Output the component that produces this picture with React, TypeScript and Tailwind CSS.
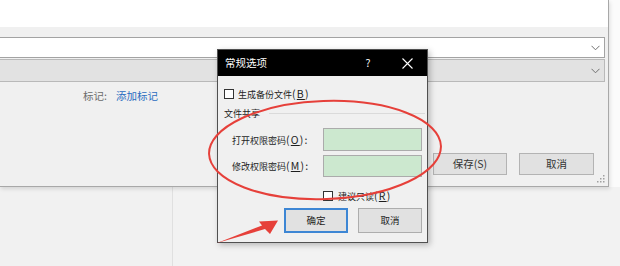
import React from "react";

function Chevron() {
  return (
    <svg width="9" height="6" viewBox="0 0 9 6" className="shrink-0">
      <polyline points="0.5,0.8 4.5,4.8 8.5,0.8" fill="none" stroke="#707070" strokeWidth="1" />
    </svg>
  );
}

function CheckBox() {
  return <span className="inline-block h-[10px] w-[10px] shrink-0 border border-[#333] bg-white" />;
}

// access-key suffix like (O): — rendered a bit wider than the CJK text, as in the dialog
function Key({ k, colon = false }: { k: string; colon?: boolean }) {
  return (
    <span className="text-[10.5px] tracking-[1.2px]">
      (<span className="underline">{k}</span>){colon ? ":" : ""}
    </span>
  );
}

function Grip() {
  return (
    <svg width="8" height="8" viewBox="0 0 8 8" className="absolute right-[3px] bottom-[3px]">
      {[
        [6, 1],
        [6, 4],
        [3, 4],
        [6, 7],
        [3, 7],
        [0, 7],
      ].map(([x, y]) => (
        <rect key={`${x}-${y}`} x={x} y={y - 1} width="1.5" height="1.5" fill="#a0a0a0" />
      ))}
    </svg>
  );
}

export default function App() {
  return (
    <div className="relative flex h-[266px] w-[620px] flex-col overflow-hidden bg-white font-['Noto_Sans_CJK_SC',sans-serif] text-[#1e1e1e]">
      {/* --- save-as window behind --- */}
      <div className="flex h-[187px] shrink-0">
        <div className="relative flex w-[609px] flex-col border-r border-b border-[#a8a8a8] bg-[#f0f0f0] shadow-[1px_2px_4px_rgba(0,0,0,0.12)]">
          <div className="h-[27px] bg-white" />
          <div className="mt-[10px] flex h-[21px] w-[605px] items-center justify-end border border-l-0 border-[#a3a3a3] bg-white pr-[4px]">
            <Chevron />
          </div>
          <div className="mt-px flex h-[23px] w-[605px] items-center justify-end border border-l-0 border-[#b9b9b9] bg-[#e2e2e2] pr-[4px]">
            <Chevron />
          </div>
          <div className="mt-[4px] flex h-[20px] items-center pl-[83px] text-[10.5px]">
            <span className="text-[#6b6b6b]">标记:</span>
            <span className="ml-[9px] text-[#2a6cc0]">添加标记</span>
          </div>
          <div className="mt-auto mb-[11px] flex justify-end gap-[12px] pr-[14px] text-[10.5px]">
            <button className="h-[22px] w-[74px] border border-[#b3b3b3] bg-[#e1e1e1] text-[#333]">保存(S)</button>
            <button className="h-[22px] w-[75px] border border-[#b3b3b3] bg-[#e1e1e1] text-[#333]">取消</button>
          </div>
          <Grip />
        </div>
        <div className="flex-1 bg-[#fbfbfb]" />
      </div>

      <div className="flex flex-1">
        <div className="w-[173px] border-r border-[#e0e0e0] bg-[#f1f1f1]" />
        <div className="flex-1 bg-[#f2f2f2]" />
      </div>

      {/* --- 常规选项 dialog --- */}
      <div className="absolute top-[49px] left-[217px] flex h-[194px] w-[211px] flex-col border border-[#505050] bg-[#f0f0f0] shadow-[2px_2px_6px_rgba(0,0,0,0.25)]">
        <div className="flex h-[26px] items-center bg-black pl-[7px] text-[10.5px] text-white">
          <span>常规选项</span>
          <span className="ml-auto flex w-[20px] justify-center">?</span>
          <span className="ml-[19px] mr-[10px] flex w-[20px] justify-center">
            <svg width="11" height="11" viewBox="0 0 11 11">
              <path d="M0.5 0.5 L10.5 10.5 M10.5 0.5 L0.5 10.5" stroke="#fff" strokeWidth="1.1" />
            </svg>
          </span>
        </div>

        <div className="flex flex-col pr-[5px] pl-[6px] text-[9px]">
          <div className="mt-[11px] flex h-[13px] items-center gap-[4px]">
            <CheckBox />
            <span>
              生成备份文件<Key k="B" />
            </span>
          </div>

          <div className="mt-[6px] flex h-[15px] items-center">
            <span>文件共享</span>
            <span className="mr-[-3px] ml-[9px] h-px flex-1 bg-[#dadada]" />
          </div>

          <div className="mt-[7px] flex h-[23px] items-center justify-between pl-[8px]">
            <span>
              打开权限密码<Key k="O" colon />
            </span>
            <span className="h-[23px] w-[99px] border border-[#ababab] bg-[#cce8cf]" />
          </div>

          <div className="mt-[4px] flex h-[22px] items-center justify-between pl-[8px]">
            <span>
              修改权限密码<Key k="M" colon />
            </span>
            <span className="h-[22px] w-[99px] border border-[#ababab] bg-[#cce8cf]" />
          </div>

          <div className="mt-[12px] flex h-[13px] items-center gap-[5px] pl-[99px]">
            <CheckBox />
            <span>
              建议只读<Key k="R" />
            </span>
          </div>

          <div className="mt-[6px] flex justify-end gap-[10px] text-[9.5px]">
            <button className="h-[25px] w-[64px] border-2 border-[#3d86d4] bg-[#e1e1e1]">确定</button>
            <button className="h-[25px] w-[64px] border border-[#adadad] bg-[#e1e1e1]">取消</button>
          </div>
        </div>
      </div>

      {/* --- red annotation --- */}
      <svg className="pointer-events-none absolute top-0 left-0" width="620" height="266" viewBox="0 0 620 266">
        <ellipse cx="325" cy="150" rx="116" ry="49" transform="rotate(-2 325 150)" fill="none" stroke="#e6403a" strokeWidth="2" />
        <polygon points="217,243 262,225.5 259,221.5 278,220.5 270,234 265,229" fill="#e6403a" />
      </svg>
    </div>
  );
}
